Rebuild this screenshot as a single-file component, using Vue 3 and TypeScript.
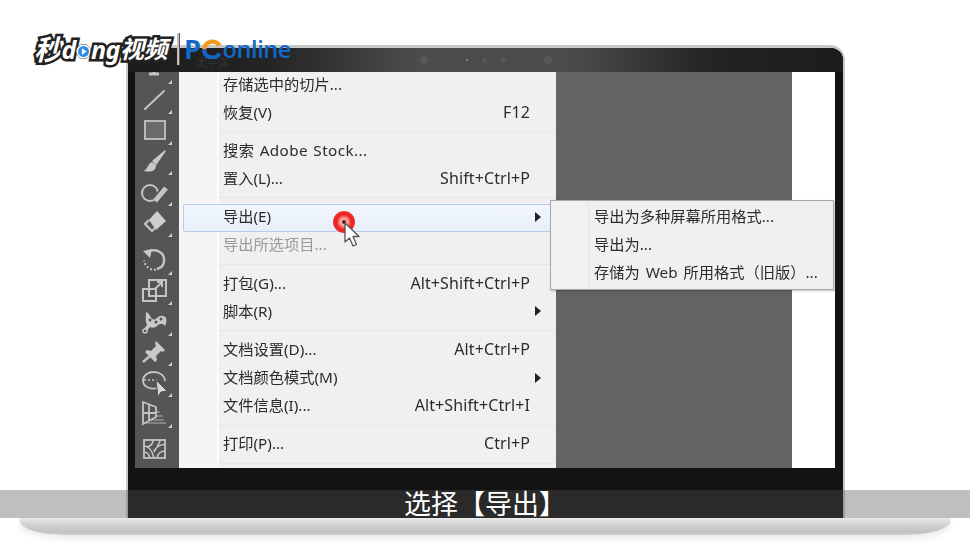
<script setup lang="ts">
interface MenuRow {
  label: string;
  shortcut?: string;
  arrow?: boolean;
  active?: boolean;
  disabled?: boolean;
  wide?: boolean;
}

const groups: MenuRow[][] = [
  [{ label: '存储选中的切片...' }, { label: '恢复(V)', shortcut: 'F12' }],
  [{ label: '搜索 Adobe Stock...', wide: true }, { label: '置入(L)...', shortcut: 'Shift+Ctrl+P' }],
  [{ label: '导出(E)', arrow: true, active: true }, { label: '导出所选项目...', disabled: true }],
  [{ label: '打包(G)...', shortcut: 'Alt+Shift+Ctrl+P' }, { label: '脚本(R)', arrow: true }],
  [
    { label: '文档设置(D)...', shortcut: 'Alt+Ctrl+P' },
    { label: '文档颜色模式(M)', arrow: true },
    { label: '文件信息(I)...', shortcut: 'Alt+Shift+Ctrl+I' },
  ],
  [{ label: '打印(P)...', shortcut: 'Ctrl+P' }],
];

const subItems = ['导出为多种屏幕所用格式...', '导出为...', '存储为 Web 所用格式（旧版）...'];

interface Tool {
  id: string;
  gap?: number;
  more?: boolean;
}

const tools: Tool[] = [
  { id: 'type', more: true },
  { id: 'line', more: true },
  { id: 'rect', more: true },
  { id: 'brush', more: true },
  { id: 'blob', more: true },
  { id: 'eraser', more: true },
  { id: 'rotate', more: true, gap: 7.5 },
  { id: 'scale', more: true },
  { id: 'warp', more: true },
  { id: 'pin', more: true },
  { id: 'shaper', more: true },
  { id: 'persp', more: true },
  { id: 'mesh', gap: 5.5 },
];
</script>

<template>
  <div class="page">
    <div class="laptop">
      <div class="lid">
        <div class="camera">
          <span class="brand">太平洋</span>
          <i class="dot big"></i>
          <i class="dot tiny"></i>
          <i class="dot"></i>
          <i class="dot"></i>
          <i class="dot big"></i>
        </div>
        <div class="screen">
          <aside class="toolbar">
            <div
              v-for="t in tools"
              :key="t.id"
              class="tool"
              :style="{ marginTop: (t.gap ?? 0) + 'px' }"
            >
              <svg width="28" height="28" viewBox="0 0 28 28" fill="none" stroke="#c4c4c4" stroke-width="2">
                <template v-if="t.id === 'type'">
                  <path d="M14 4v14M9 19h10" stroke-width="3" />
                </template>
                <template v-else-if="t.id === 'line'">
                  <path d="M5 23L24 5" stroke-linecap="round" />
                </template>
                <template v-else-if="t.id === 'rect'">
                  <rect x="5" y="5" width="20" height="18" fill="#6a6a6a" stroke="#b8b8b8" />
                </template>
                <template v-else-if="t.id === 'brush'">
                  <path d="M25 4L13 14l3 3z" fill="#c9c9c9" stroke="#c9c9c9" stroke-width="1.500" stroke-linejoin="round" />
                  <path d="M12 15c-3 1-4 4-5 6l-3 3c4 1 9 1 11-2 1-2 1-3 1-4z" fill="#c9c9c9" stroke="none" />
                </template>
                <template v-else-if="t.id === 'blob'">
                  <circle cx="10" cy="15" r="8" />
                  <path d="M15 23L26 10" stroke="#555" stroke-width="8" />
                  <path d="M15 23L26 10" stroke-width="5" />
                </template>
                <template v-else-if="t.id === 'eraser'">
                  <path d="M17 3l9 10-10 9-7-10z" fill="#cfcfcf" stroke="none" />
                  <path d="M9 12l-4 4 7 7 4-4" stroke-width="2.200" />
                </template>
                <template v-else-if="t.id === 'rotate'">
                  <path d="M8 6c7-4 17 0 16 9 0 4-3 7-7 8" stroke-width="2.400" />
                  <path d="M16 23.500c-6 1-11-3-12-9" stroke-dasharray="2 2" />
                  <path d="M3 5l9-2-2 9z" fill="#c9c9c9" stroke="none" />
                </template>
                <template v-else-if="t.id === 'scale'">
                  <rect x="9" y="3" width="17" height="16" />
                  <rect x="3" y="12" width="13" height="12" />
                  <path d="M15 12l7-7M17 5h5v5" />
                </template>
                <template v-else-if="t.id === 'warp'">
                  <path d="M6 4c3 1 4 4 5 6 2 2 4 2 6 0 3-3 7-3 9 0 1 3 0 6-1 8-2-3-5-3-8 0-2 2-5 2-7 1l-4 5-3-2 4-5C5 13 6 8 6 4z" fill="#c9c9c9" stroke="none" />
                  <circle cx="5" cy="23" r="2" fill="#555" stroke-width="1.500" />
                  <circle cx="16" cy="14" r="1.500" fill="#555" stroke="none" />
                  <circle cx="10" cy="12" r="1.500" fill="#555" stroke="none" />
                  <circle cx="21" cy="11" r="1.500" fill="#555" stroke="none" />
                </template>
                <template v-else-if="t.id === 'pin'">
                  <path d="M16 3l9 9-2 2-2-1-5 5 1 4-2 2-10-10 2-2 4 1 5-5-1-3z" fill="#c9c9c9" stroke="none" />
                  <path d="M10 18l-7 6" stroke-width="2.500" />
                </template>
                <template v-else-if="t.id === 'shaper'">
                  <path d="M17 19C9 21 3 17 3 11.500S8 3 14 3s11 4 11 9" stroke-width="1.800" />
                  <path d="M4 11h13" stroke-width="1.500" stroke-dasharray="2 2" />
                  <path d="M16 11l11 11-6 1-3 5z" fill="#d6d6d6" stroke="#555" stroke-width="1" />
                </template>
                <template v-else-if="t.id === 'persp'">
                  <path d="M3 3l13 5v10L3 25zM3 14l13 0M9 6v16" stroke-width="1.800" />
                  <path d="M16 13h4M16 17h7M11 21h13M6 24h20" stroke-width="1.300" opacity=".55" />
                </template>
                <template v-else>
                  <rect x="4" y="5" width="21" height="18" stroke-width="1.800" />
                  <path d="M4 11c5 0 8 4 10 12M25 9c-6 1-10 4-11 8M13 5c0 3-2 6-6 7M25 16c-4 0-7 2-8 7M4 17c3 0 5 2 6 6M20 5c0 2-1 4-3 6" stroke-width="1.700" />
                </template>
              </svg>
              <i v-if="t.more" class="more"></i>
            </div>
          </aside>
          <section class="menu">
            <div v-for="(group, i) in groups" :key="i" class="group">
              <div
                v-for="row in group"
                :key="row.label"
                class="row"
                :class="{ active: row.active, disabled: row.disabled, wide: row.wide }"
              >
                <span>{{ row.label }}</span>
                <span v-if="row.shortcut" class="key">{{ row.shortcut }}</span>
                <i v-if="row.arrow" class="arrow"></i>
              </div>
            </div>
          </section>
          <div class="canvas"></div>
          <div class="paper"></div>
          <div class="submenu">
            <div v-for="item in subItems" :key="item" class="sub-row">{{ item }}</div>
          </div>
          <div class="click">
            <i class="halo"></i>
            <svg class="cursor" width="20" height="27" viewBox="0 0 20 27">
              <path d="M2 1v19l4.500-4 3.500 8 3.500-1.500-3.500-8h6z" fill="#fff" stroke="#555" stroke-width="1.300" stroke-linejoin="round" />
            </svg>
          </div>
        </div>
      </div>
      <div class="base"></div>
    </div>

    <div class="logo">
      <div class="mark">
        <span class="cjk-big">秒</span>
        <span>d</span>
        <svg class="play" width="15" height="15" viewBox="0 0 19 19">
          <circle cx="9.500" cy="9.500" r="9" fill="#fff" stroke="#222" />
          <circle cx="9.500" cy="9.500" r="7" fill="#2f8de4" />
          <path d="M7.500 5.500l6 4-6 4z" fill="#fff" />
        </svg>
        <span>ng</span>
        <span class="cjk">视频</span>
      </div>
      <i class="divider"></i>
      <div class="pc">
        <span class="p">P</span>
        <svg width="22" height="20" viewBox="0 0 25 22" fill="none" stroke-width="5">
          <path d="M21 16a9 8 0 0 1-17-5" stroke="#1565c0" />
          <path d="M4 11a9 8 0 0 1 17-4" stroke="#f39a1e" />
        </svg>
        <span>online</span>
      </div>
    </div>

    <div class="caption">选择【导出】</div>
  </div>
</template>

<style scoped>
.page {
  position: relative;
  width: 970px;
  height: 544px;
  overflow: hidden;
  background: #fff;
  font-family: "Noto Sans", "Noto Sans CJK SC", sans-serif;
}

.laptop {
  padding-top: 45px;
}

.lid {
  box-sizing: border-box;
  width: 719px;
  height: 473px;
  margin-left: 126px;
  padding: 0 8px 50px 7px;
  background: #131313;
  border: solid #c8c8c8;
  border-width: 3px 2px 0 2px;
  border-radius: 15px 15px 0 0;
  display: flex;
  flex-direction: column;
}

.camera {
  position: relative;
  flex: none;
  height: 24px;
  margin: 0 -8px 0 -7px;
  border-radius: 12px 12px 0 0;
  background: linear-gradient(90deg, #1c1c1c 0%, #242424 20%, #4b4b4b 40%, #4b4b4b 62%, #232323 82%, #1c1c1c 100%);
  display: flex;
  align-items: center;
  justify-content: center;
  gap: 14px;
}

.brand {
  position: absolute;
  left: 68px;
  top: 9px;
  font-size: 11px;
  line-height: 11px;
  color: #343434;
}

.dot {
  width: 5px;
  height: 5px;
  border-radius: 50%;
  background: #575757;
  filter: blur(0.5px);
}

.dot.big {
  width: 8px;
  height: 8px;
  margin: 0 24px;
}

.dot.tiny {
  width: 2px;
  height: 2px;
  background: #9a9a9a;
}

.screen {
  position: relative;
  flex: 1;
  display: flex;
  overflow: hidden;
  filter: blur(0.45px);
}

.toolbar {
  flex: none;
  width: 44px;
  margin-top: -18px;
  background: #555;
  padding-bottom: 30px;
}

.tool {
  position: relative;
  height: 30.6px;
  display: flex;
  align-items: center;
  padding-left: 5px;
}

.more {
  position: absolute;
  right: 7px;
  bottom: 1px;
  border-left: 4px solid transparent;
  border-bottom: 4px solid #d0d0d0;
}

.menu {
  flex: none;
  box-sizing: border-box;
  width: 377px;
  margin-top: -1px;
  background: linear-gradient(90deg, #f5f5f5 0, #f5f5f5 38px, #fbfbfb 38px, #fbfbfb 40px, #f0f0f0 40px);
  color: #2c2c2c;
  font-size: 15.25px;
}

.group {
  padding: 0 0 4px;
  margin-bottom: 5.400px;
  border-bottom: 1px solid #e6e6e6;
  margin-left: 40px;
}

.row {
  position: relative;
  box-sizing: border-box;
  height: 28px;
  display: flex;
  align-items: center;
  justify-content: space-between;
  padding: 0 26px 5px 4px;
  white-space: nowrap;
}

.row.wide {
  letter-spacing: 0.4px;
  word-spacing: 1px;
}

.row.active::before {
  content: "";
  position: absolute;
  z-index: 0;
  top: 0;
  left: -36px;
  right: 3px;
  bottom: 0;
  border: 1px solid #b4cdec;
  border-radius: 2px;
  background: linear-gradient(#f2f7fd, #e6eef9);
}

.row span {
  position: relative;
}

.row.disabled {
  color: #9a9a9a;
}

.key {
  font-size: 16px;
  letter-spacing: 0.1px;
  padding-top: 2px;
}

.arrow {
  position: absolute;
  right: 15px;
  top: 8px;
  border-left: 6px solid #222;
  border-top: 5px solid transparent;
  border-bottom: 5px solid transparent;
}

.canvas {
  flex: none;
  width: 236px;
  background: #636363;
}

.paper {
  flex: 1;
  background: #fff;
}

.submenu {
  position: absolute;
  left: 415px;
  top: 128px;
  width: 284px;
  box-sizing: border-box;
  padding: 1px 0 3px 43px;
  border: 1px solid #a8a8a8;
  background: linear-gradient(90deg, #f1f1f1 0, #f1f1f1 37px, #e4e4e4 37px, #e4e4e4 38px, #f0f0f0 38px);
  box-shadow: 1px 1px 2px rgba(0, 0, 0, 0.25);
  color: #2c2c2c;
  font-size: 15.25px;
  word-spacing: 2px;
}

.sub-row {
  height: 28px;
  line-height: 28px;
  white-space: nowrap;
}

.click {
  position: absolute;
  left: 198px;
  top: 139px;
  width: 22px;
  height: 22px;
}

.halo {
  display: block;
  width: 22px;
  height: 22px;
  border-radius: 50%;
  background: radial-gradient(circle, #4a1515 0, #4a1515 8%, #fbb0a8 16%, #f99a90 26%, #ee2222 48%, #ee2a2a 66%, rgba(240, 60, 60, 0) 100%);
}

.cursor {
  position: absolute;
  left: 10px;
  top: 11px;
}

.base {
  width: 932px;
  height: 17px;
  margin-left: 19px;
  border-radius: 2px 2px 44px 44px / 2px 2px 15px 15px;
  background: linear-gradient(#ececec 0, #dedede 3px, #cfcfcf 8px, #c2c2c2 14px, #d0d0d0 100%);
  box-shadow: 0 4px 6px rgba(0, 0, 0, 0.08);
}

.logo {
  position: absolute;
  left: 34px;
  top: 33px;
  display: flex;
  align-items: center;
}

.mark {
  display: flex;
  align-items: center;
  width: 135px;
  color: #fff;
  font-size: 25px;
  line-height: 32px;
  font-weight: 700;
  font-style: italic;
  letter-spacing: -0.5px;
  -webkit-text-stroke: 5px #222;
  paint-order: stroke fill;
  white-space: nowrap;
}

.cjk-big {
  font-size: 28px;
}

.cjk {
  font-size: 24px;
}

.play {
  margin-top: 5px;
}

.divider {
  width: 2px;
  height: 32px;
  margin: 0 4px 0 8px;
  background: #cdbdb8;
  border-right: 1px solid #555;
}

.pc {
  display: flex;
  align-items: center;
  color: #1268c6;
  font-size: 23.500px;
  font-weight: 600;
  line-height: 18px;
  letter-spacing: -0.4px;
  font-family: "Open Sans", "Noto Sans", sans-serif;
}

.p {
  font-size: 27px;
  font-weight: 700;
}

.caption {
  position: absolute;
  left: 0;
  right: 0;
  top: 490px;
  height: 28px;
  background: rgba(84, 84, 84, 0.374);
  color: #fff;
  font-size: 27px;
  line-height: 28px;
  text-align: center;
}
</style>
